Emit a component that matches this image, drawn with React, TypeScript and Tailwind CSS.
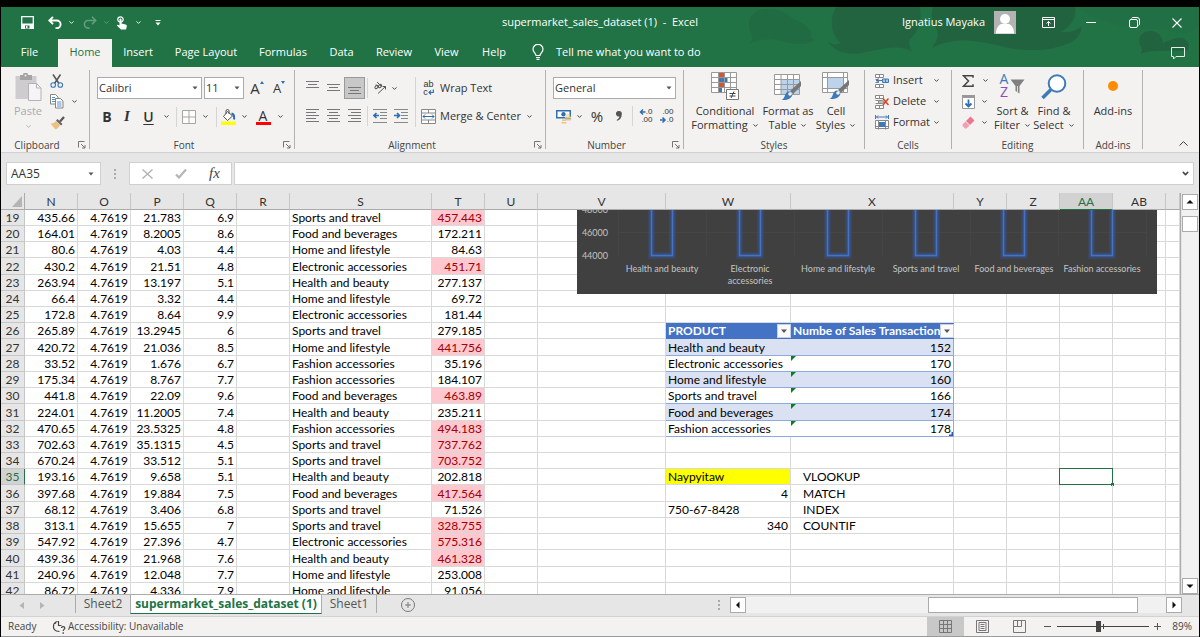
import type { ReactNode } from 'react';
import { ChevronDown, ChevronUp } from 'lucide-react';
import clsx from 'clsx';

type Row = { n: string; p: string; q: string; s: string; t: string };

const FIRST_ROW = 19;

const ROWS: Row[] = [
  { n: '435.66', p: '21.783', q: '6.9', s: 'Sports and travel', t: '457.443' },
  { n: '164.01', p: '8.2005', q: '8.6', s: 'Food and beverages', t: '172.211' },
  { n: '80.6', p: '4.03', q: '4.4', s: 'Home and lifestyle', t: '84.63' },
  { n: '430.2', p: '21.51', q: '4.8', s: 'Electronic accessories', t: '451.71' },
  { n: '263.94', p: '13.197', q: '5.1', s: 'Health and beauty', t: '277.137' },
  { n: '66.4', p: '3.32', q: '4.4', s: 'Home and lifestyle', t: '69.72' },
  { n: '172.8', p: '8.64', q: '9.9', s: 'Electronic accessories', t: '181.44' },
  { n: '265.89', p: '13.2945', q: '6', s: 'Sports and travel', t: '279.185' },
  { n: '420.72', p: '21.036', q: '8.5', s: 'Home and lifestyle', t: '441.756' },
  { n: '33.52', p: '1.676', q: '6.7', s: 'Fashion accessories', t: '35.196' },
  { n: '175.34', p: '8.767', q: '7.7', s: 'Fashion accessories', t: '184.107' },
  { n: '441.8', p: '22.09', q: '9.6', s: 'Food and beverages', t: '463.89' },
  { n: '224.01', p: '11.2005', q: '7.4', s: 'Health and beauty', t: '235.211' },
  { n: '470.65', p: '23.5325', q: '4.8', s: 'Fashion accessories', t: '494.183' },
  { n: '702.63', p: '35.1315', q: '4.5', s: 'Sports and travel', t: '737.762' },
  { n: '670.24', p: '33.512', q: '5.1', s: 'Sports and travel', t: '703.752' },
  { n: '193.16', p: '9.658', q: '5.1', s: 'Health and beauty', t: '202.818' },
  { n: '397.68', p: '19.884', q: '7.5', s: 'Food and beverages', t: '417.564' },
  { n: '68.12', p: '3.406', q: '6.8', s: 'Sports and travel', t: '71.526' },
  { n: '313.1', p: '15.655', q: '7', s: 'Sports and travel', t: '328.755' },
  { n: '547.92', p: '27.396', q: '4.7', s: 'Electronic accessories', t: '575.316' },
  { n: '439.36', p: '21.968', q: '7.6', s: 'Health and beauty', t: '461.328' },
  { n: '240.96', p: '12.048', q: '7.7', s: 'Home and lifestyle', t: '253.008' },
  { n: '86.72', p: '4.336', q: '7.9', s: 'Home and lifestyle', t: '91.056' },
];

// Keyed by sheet row number
const PRODUCTS: Record<number, [string, string]> = {
  27: ['Health and beauty', '152'],
  28: ['Electronic accessories', '170'],
  29: ['Home and lifestyle', '160'],
  30: ['Sports and travel', '166'],
  31: ['Food and beverages', '174'],
  32: ['Fashion accessories', '178'],
};

const LOOKUPS: Record<number, [string, string]> = {
  35: ['Naypyitaw', 'VLOOKUP'],
  36: ['4', 'MATCH'],
  37: ['750-67-8428', 'INDEX'],
  38: ['340', 'COUNTIF'],
};

const COLUMNS = [
  { name: 'N', width: 'w-[53px]' },
  { name: 'O', width: 'w-[53px]' },
  { name: 'P', width: 'w-[53px]' },
  { name: 'Q', width: 'w-[53px]' },
  { name: 'R', width: 'w-[53px]' },
  { name: 'S', width: 'w-[142px]' },
  { name: 'T', width: 'w-[53px]' },
  { name: 'U', width: 'w-[53px]' },
  { name: 'V', width: 'w-[128px]' },
  { name: 'W', width: 'w-[125px]' },
  { name: 'X', width: 'w-[163px]' },
  { name: 'Y', width: 'w-[53px]' },
  { name: 'Z', width: 'w-[53px]' },
  { name: 'AA', width: 'w-[53px]' },
  { name: 'AB', width: 'w-[53px]' },
  { name: '', width: '' },
];

const TABS = [
  { name: 'File', width: 'w-[57px]' },
  { name: 'Home', width: 'w-[54px]' },
  { name: 'Insert', width: 'w-[52px]' },
  { name: 'Page Layout', width: 'w-[84px]' },
  { name: 'Formulas', width: 'w-[70px]' },
  { name: 'Data', width: 'w-[47px]' },
  { name: 'Review', width: 'w-[58px]' },
  { name: 'View', width: 'w-[47px]' },
  { name: 'Help', width: 'w-[48px]' },
];

/* ---------- small shared pieces ---------- */

function Btn({ label, className, children }: { label?: string; className?: string; children: ReactNode }) {
  return (
    <button
      type="button"
      aria-label={label}
      className={clsx('flex shrink-0 items-center justify-center whitespace-nowrap', className)}
    >
      {children}
    </button>
  );
}

function Chev({ className }: { className?: string }) {
  return <ChevronDown size={7} strokeWidth={3} className={clsx('shrink-0', className)} aria-hidden />;
}

function More({ className, label = 'More' }: { className?: string; label?: string }) {
  return (
    <Btn label={label} className={className}>
      <Chev />
    </Btn>
  );
}

function Sep({ className }: { className?: string }) {
  return (
    <div className={clsx('flex shrink-0 justify-center', className)}>
      <div className="h-5 w-px bg-[#d5d5d5]" />
    </div>
  );
}

function Combo({ label, value, className }: { label: string; value: string; className?: string }) {
  return (
    <div className={clsx('relative h-[22px] shrink-0', className)}>
      <select
        aria-label={label}
        className="h-full w-full appearance-none border border-[#ababab] bg-white pl-px text-[11px] leading-4 text-[#333]"
      >
        <option>{value}</option>
      </select>
      <svg viewBox="0 0 6 4" className="pointer-events-none absolute top-[9px] right-1 h-1 w-1.5" aria-hidden>
        <path d="M0.5 0.5h5L3 3.5z" fill="#555" />
      </svg>
    </div>
  );
}

function Launcher() {
  return (
    <svg viewBox="0 0 8 8" className="h-2 w-2" fill="none" stroke="#666" strokeWidth="0.9">
      <path d="M0.5 6.5v-6h6M3 3l4 4M7 4v3H4" />
    </svg>
  );
}

function Group({
  title,
  launcher,
  className,
  children,
}: {
  title: string;
  launcher?: boolean;
  className?: string;
  children: ReactNode;
}) {
  return (
    <section className={clsx('flex shrink-0', className)} aria-label={title}>
      <div className="flex min-w-0 flex-1 flex-col">
        <div className="flex-1">{children}</div>
        <div
          className={clsx(
            'relative flex h-[14px] items-center justify-center text-[10px] text-[#444]',
            launcher && 'pr-4',
          )}
        >
          {title}
          {launcher && (
            <Btn label={`${title} settings`} className="absolute right-[3px]">
              <Launcher />
            </Btn>
          )}
        </div>
      </div>
      <div className="my-[3px] w-px bg-[#b1b1b1]" />
    </section>
  );
}

function BigButton({ icon, lines, more, className }: { icon: ReactNode; lines: string[]; more?: boolean; className?: string }) {
  return (
    <button type="button" className={clsx('flex shrink-0 flex-col items-center pt-[5px]', className)}>
      <span className="flex h-8 items-start justify-center">{icon}</span>
      {lines.map((line, i) => (
        <span key={line} className="flex h-[14px] items-center gap-1 whitespace-nowrap text-[11px]">
          {line}
          {more && i === lines.length - 1 && <Chev />}
        </span>
      ))}
    </button>
  );
}

/* ---------- icons ---------- */

function LinesIcon({ lines }: { lines: [number, number, number][] }) {
  return (
    <svg viewBox="0 0 14 16" className="h-4 w-3.5" stroke="#777" strokeWidth="1">
      {lines.map(([x, y, w]) => (
        <path key={y} d={`M${x} ${y}.5h${w}`} />
      ))}
    </svg>
  );
}

function IndentIcon({ right }: { right?: boolean }) {
  return (
    <svg viewBox="0 0 14 14" className="h-3.5 w-3.5" fill="none" stroke="#888">
      <path d="M0 0.5h14M7 3.5h7M7 6.5h7M7 9.5h7M0 13.5h14" />
      <path
        d={right ? 'M0 6.5h5M3 4l2.5 2.5L3 9' : 'M1 6.5h5M3.5 4L1 6.5 3.5 9'}
        stroke="#2b6cb0"
        strokeWidth="1.6"
      />
    </svg>
  );
}

function PasteIcon() {
  return (
    <svg viewBox="0 0 27 28" className="h-7 w-[27px]">
      <path d="M0.5 3h21v23h-21z" fill="#cfcccf" />
      <path d="M5 2h3a2.5 2.5 0 0 1 5 0h4v5H5z" fill="#a5a3a5" />
      <circle cx="10.5" cy="2.5" r="1" fill="#f1f1f1" />
      <path d="M13.5 10.5h8l4.500 4.500v12.500H13.500z" fill="#f7f4f8" stroke="#b5b2b6" />
      <path d="M21.5 10.5v4.500h4.500" fill="none" stroke="#b5b2b6" />
    </svg>
  );
}

function ScissorsIcon() {
  return (
    <svg viewBox="0 0 14 14" className="h-3.5 w-3.5" fill="none">
      <path d="M3 0.5l6 9M10.5 0.5l-6 9" stroke="#555" strokeWidth="1.5" />
      <circle cx="3.2" cy="11" r="2.3" stroke="#3e7ab8" strokeWidth="1.1" />
      <circle cx="10.3" cy="11" r="2.3" stroke="#3e7ab8" strokeWidth="1.1" />
    </svg>
  );
}

function CopyIcon() {
  return (
    <svg viewBox="0 0 14 15" className="h-[15px] w-3.5" fill="#fff" stroke="#777" strokeWidth="0.9">
      <path d="M0.5 0.5h5l2.500 2.500v7h-7.500z" />
      <path d="M5.5 4.5h5l2.500 2.500v7H5.500z" />
      <path d="M2 3.5h3M2 5.5h3M2 7.5h3M7 8h4.500M7 10h4.500M7 12h4.500" stroke="#4a84bf" />
    </svg>
  );
}

function PainterIcon() {
  return (
    <svg viewBox="0 0 15 14" className="h-3.5 w-[15px]">
      <path d="M0.5 7.5c2 0 4-0.5 5.500-2.500l4 4c-1 2-2.500 3.500-4.500 4.500z" fill="#ecc07e" />
      <path d="M6 4.5l1.500-1.500 5 5L11 9.500z" fill="#666" />
      <path d="M10 5.5l4-4.500" stroke="#555" strokeWidth="2.2" />
    </svg>
  );
}

function BordersIcon() {
  return (
    <svg viewBox="0 0 14 14" className="h-3.5 w-3.5" fill="#fdfdfd" stroke="#a5a5a5">
      <path d="M0.5 0.5h13v13h-13zM7 0.5v13M0.5 7h13" />
    </svg>
  );
}

function FillColorIcon() {
  return (
    <svg viewBox="0 0 15 16" className="h-4 w-[15px]" fill="none">
      <path d="M6.5 2.5l5 4.500-5 4.500-4-4z" fill="#fff" stroke="#555" />
      <path d="M5 5V2a1.500 1.500 0 0 1 3 0v3" stroke="#555" />
      <path d="M10.5 4.5c2.500 0.500 3 3 2.500 6" stroke="#2f6eb0" strokeWidth="2" />
      <path d="M0 12.500h15v3.500H0z" fill="#ffff00" />
    </svg>
  );
}

function OrientationIcon() {
  return (
    <svg viewBox="0 0 14 14" className="h-3.5 w-3.5" fill="none" stroke="#555">
      <ellipse cx="3.5" cy="6" rx="1.8" ry="1.3" transform="rotate(-45 3.5 6)" />
      <ellipse cx="7" cy="5" rx="1.8" ry="1.3" transform="rotate(-45 7 5)" />
      <path d="M3 3.5l3 3M4 1l4.500 4.500M5 12.500l7.500-7M9.500 5.500h3v3" />
    </svg>
  );
}

function MergeIcon() {
  return (
    <svg viewBox="0 0 15 15" className="h-[15px] w-[15px]" fill="none" stroke="#888">
      <path d="M0.5 0.5h14v14H0.500zM0.500 4h14M0.500 11h14M7.500 0.500V4M7.500 11v3.500" fill="#fff" />
      <path d="M2 7.5h11M4 5.500l-2 2 2 2M11 5.500l2 2-2 2" stroke="#2b6cb0" />
    </svg>
  );
}

function CurrencyIcon() {
  return (
    <svg viewBox="0 0 15 15" className="h-[15px] w-[15px]">
      <path d="M0.75 1.75h13.500v7H0.750z" fill="#fff" stroke="#2f6eb0" strokeWidth="1.5" />
      <circle cx="7.5" cy="5.2" r="2.2" fill="#2f6eb0" />
      <path d="M9 7.5h6v1.500H9zM9 10h6v1.500H9zM6 10.500h4V12H6zM5.500 13h5v1.500h-5zM9 5.500h5v1H9z" fill="#efc57f" />
    </svg>
  );
}

function BrushOverlay() {
  return (
    <>
      <path d="M27 9v5l-8 8-3-3z" fill="#777" />
      <path d="M15.5 19.5l3 3c-1 4-5 6-11 5.500 3-1.500 3-4 4-6 1-2 2.500-2.500 4-2.500z" fill="#3e7ab8" />
      <circle cx="16" cy="22" r="1.8" fill="#f1f1f1" />
    </>
  );
}

function ConditionalIcon() {
  return (
    <svg viewBox="0 0 28 28" className="h-7 w-7">
      <path d="M0.5 0.5h25v20h-25z" fill="#fff" />
      <path d="M8 0.5h5v5H8zM8 11h6v4.500H8z" fill="#d9532c" />
      <path d="M8 6h8.500v4.500H8zM8 16h3v4.500H8z" fill="#3e7ab8" />
      <path
        d="M0.5 0.5h25v20h-25zM0.5 5.5h25M0.5 10.5h25M0.5 15.5h25M7.5 0.5v20M13.5 0.5v20M19.5 0.5v20"
        fill="none"
        stroke="#999"
      />
      <path d="M15.5 17.5h12v10h-12z" fill="#fff" stroke="#777" />
      <path d="M18.5 21.5h6M18.5 24h6M23 19.5l-3 6.500" stroke="#444" fill="none" />
    </svg>
  );
}

function FormatTableIcon() {
  return (
    <svg viewBox="0 0 28 29" className="h-[29px] w-7">
      <path d="M0.5 2.5h25v20h-25z" fill="#fff" />
      <path d="M7 8h18.500v14.500H7z" fill="#bdd3ec" />
      <path
        d="M0.5 2.5h25v20h-25zM0.5 7.5h25M0.5 12.5h25M0.5 17.5h25M7 2.5v20M13.5 2.5v20M19.5 2.5v20"
        fill="none"
        stroke="#999"
      />
      <BrushOverlay />
    </svg>
  );
}

function CellStylesIcon() {
  return (
    <svg viewBox="0 0 28 28" className="h-7 w-7">
      <path d="M0.5 0.5h25v20h-25zM0.5 5.5h25M0.5 16.5h25M5.5 0.5v20M21.5 0.5v20" fill="#fff" stroke="#999" />
      <path d="M5.5 5.5h16v11h-16z" fill="#bdd3ec" stroke="#999" />
      <g transform="translate(0 -1)">
        <BrushOverlay />
      </g>
    </svg>
  );
}

function CellsIcon({ kind }: { kind: 'insert' | 'delete' | 'format' }) {
  if (kind === 'format') {
    return (
      <svg viewBox="0 0 14 15" className="h-[15px] w-3.5" fill="none" stroke="#888">
        <path d="M0.5 0v4M13.5 0v4M1.5 2h11M3 0.5L1.5 2 3 3.5M11 0.5L12.5 2 11 3.5" stroke="#3e7ab8" />
        <path d="M0.5 5.5h13v8h-13zM3.5 5.5v9M10.5 5.5v9M0.5 11.5h13" fill="#fff" />
        <path d="M4 7h6v5H4z" fill="#3e7ab8" stroke="none" />
      </svg>
    );
  }
  return (
    <svg viewBox="0 0 14 14" className="h-3.5 w-3.5" fill="none" stroke="#888">
      <path d="M0.5 0.5h8v3h-8zM4.5 0.5v3M0.5 10.5h8v3h-8zM4.5 10.5v3M0.5 8.5h3v-3h-3" fill="#fff" />
      {kind === 'insert' ? (
        <>
          <path d="M7.5 5h6v3.500h-6zM10.500 5v3.500" fill="#a9c6e6" stroke="#3e7ab8" />
          <path d="M7 6.5H1M3.500 4.500l-2.500 2 2.500 2" stroke="#3e7ab8" />
        </>
      ) : (
        <>
          <path d="M3.5 5.5h4l2 1.500-2 1.500h-4z" fill="#bbb" />
          <path d="M8 3.5l5.500 6.500M13.500 3.500L8 10" stroke="#d9431f" strokeWidth="1.5" />
        </>
      )}
    </svg>
  );
}

function DecimalIcon({ increase }: { increase?: boolean }) {
  return (
    <span className="flex w-[15px] flex-col items-end font-['Liberation_Sans',sans-serif] text-[8px] leading-[8px]">
      <span className="flex items-center">
        {increase && (
          <svg viewBox="0 0 7 6" className="h-1.5 w-[7px]" fill="none" stroke="#2f6eb0" strokeWidth="1.5">
            <path d="M1.500 3h5M4 0.500L1.500 3 4 5.500" />
          </svg>
        )}
        {increase ? '.0' : '.00'}
      </span>
      <span className="flex items-center">
        {!increase && (
          <svg viewBox="0 0 7 6" className="h-1.5 w-[7px]" fill="none" stroke="#2f6eb0" strokeWidth="1.5">
            <path d="M0 3h5M2.500 0.500L5 3 2.500 5.500" />
          </svg>
        )}
        {increase ? '.00' : '.0'}
      </span>
    </span>
  );
}

function WrapIcon() {
  return (
    <span className="flex w-[15px] flex-col items-center font-['Liberation_Sans',sans-serif] text-[9px] leading-[8px]">
      <span>ab</span>
      <span className="flex items-center">
        c
        <svg viewBox="0 0 6 6" className="h-1.5 w-1.5" fill="none" stroke="#2f6eb0" strokeWidth="1.2">
          <path d="M5.300 0.500v3H1.500M3 1.500l-2 2 2 2" />
        </svg>
      </span>
    </span>
  );
}

function SortIcon() {
  return (
    <span className="flex items-start">
      <span className="flex flex-col items-center text-[14px] leading-[13px]">
        <span className="text-[#3e7ab8]">A</span>
        <span className="text-[#8a4fb5]">Z</span>
      </span>
      <svg viewBox="0 0 15 15" className="mt-[7px] ml-0.5 h-[15px] w-[15px]">
        <path d="M0.5 0.5h14L9.500 7v7.500l-4-2.500V7z" fill="#808080" />
        <path d="M7.5 7v6" stroke="#ddd" />
      </svg>
    </span>
  );
}

function FindIcon() {
  return (
    <svg viewBox="0 0 26 26" className="mt-0.5 h-[26px] w-[26px]" fill="none" stroke="#3e7ab8">
      <circle cx="16" cy="9.5" r="8.3" fill="#fff" strokeWidth="2" />
      <path d="M10 15.5L1.500 24" strokeWidth="3.6" />
    </svg>
  );
}

function FillDownIcon() {
  return (
    <svg viewBox="0 0 13 14" className="h-3.5 w-[13px]" fill="none">
      <path d="M0.5 0.5h12v13h-12z" fill="#fff" stroke="#999" />
      <path d="M0 0h13v3H0z" fill="#999" />
      <path d="M6.5 4.5v7M3.500 8.500l3 3 3-3" stroke="#2f6eb0" strokeWidth="1.8" />
    </svg>
  );
}

function EraserIcon() {
  return (
    <svg viewBox="0 0 13 13" className="h-[13px] w-[13px]">
      <path d="M8.5 0.5l4 4-4.500 4.500-4-4z" fill="#e8788f" />
      <path d="M3.5 5.5l4 4-3 3H3L0.500 10V8.500z" fill="#f0a0b0" />
    </svg>
  );
}

/* ---------- title bar and tabs ---------- */

function TitleBar() {
  return (
    <div className="relative grid h-8 grid-cols-[1fr_auto_1fr] items-center pb-px text-[11px] text-white">
      <div className="flex items-center pl-[19px]">
        <Btn label="Save" className="w-[14px]">
          <svg viewBox="0 0 13 13" className="h-[13px] w-[13px]" fill="none" stroke="#fff" strokeWidth="1.3">
            <path d="M0.7 0.7h11.600v11.600H0.700z" />
            <path d="M1 7.5h11v5H1z" fill="#fff" stroke="none" />
            <path d="M4 9.5h4.500v3H4z" fill="#217346" stroke="none" />
            <path d="M5 10h1.500v2H5z" fill="#fff" stroke="none" />
          </svg>
        </Btn>
        <Btn label="Undo" className="ml-[13px] w-4">
          <svg viewBox="0 0 14 13" className="h-[13px] w-3.5" fill="none" stroke="#fff" strokeWidth="1.9">
            <path d="M5 0.8L1.300 4.500 5 8.200M1.500 4.500h7.300a3.800 3.800 0 0 1 0 7.600H7.500" />
          </svg>
        </Btn>
        <More className="w-4" label="Undo list" />
        <Btn label="Redo" className="ml-[3px] w-4 opacity-30">
          <svg viewBox="0 0 14 13" className="h-[13px] w-3.5" fill="none" stroke="#fff" strokeWidth="1.6">
            <path d="M9 0.8l3.700 3.700L9 8.200M12.500 4.500H5.200a3.800 3.800 0 0 0 0 7.600h1.300" />
          </svg>
        </Btn>
        <More className="w-4 opacity-30" label="Redo list" />
        <Btn label="Touch mode" className="w-4">
          <svg viewBox="0 0 12 14" className="h-3.5 w-3">
            <circle cx="4.5" cy="3.5" r="2.7" fill="none" stroke="#fff" strokeWidth="1.2" />
            <path d="M3.5 3.5a1 1 0 0 1 2 0v4l4 1c1 0.300 1.500 1 1.300 2L10 13.500H5L0.800 9.500c0.500-1 1.500-1 2.700 0z" fill="#fff" />
          </svg>
        </Btn>
        <More className="w-4" label="Touch options" />
        <Btn label="Customize toolbar" className="ml-1 w-4">
          <svg viewBox="0 0 6 6" className="h-1.5 w-1.5">
            <path d="M0.5 0h5v1h-5zM0.500 2.500h5L3 5.500z" fill="#fff" />
          </svg>
        </Btn>
      </div>
      <h1 className="whitespace-pre">supermarket_sales_dataset (1)  -  Excel</h1>
      <div className="flex items-center justify-end pr-3.5">
        <span>Ignatius Mayaka</span>
        <svg viewBox="0 0 22 23" className="ml-[9px] h-[23px] w-[22px]">
          <path d="M0 0h22v23H0z" fill="#b3b3b3" />
          <circle cx="11" cy="8" r="5" fill="#fff" />
          <path d="M2 22.5c0-6 3-9 5.500-9.500h7c2.500 0.500 5.500 3.500 5.500 9.500z" fill="#fff" />
        </svg>
        <Btn label="Ribbon display options" className="ml-6 w-4">
          <svg viewBox="0 0 13 11" className="h-[11px] w-[13px]" fill="none" stroke="#fff">
            <path d="M0.5 0.5h12v10h-12zM0.5 2.5h12M6.5 9V4.5M4.5 6.5l2-2 2 2" />
          </svg>
        </Btn>
        <Btn label="Minimize" className="ml-[27px] w-4">
          <span className="h-px w-2.5 bg-white" />
        </Btn>
        <Btn label="Restore" className="ml-[27px] w-4">
          <svg viewBox="0 0 11 11" className="h-[11px] w-[11px]" fill="none" stroke="#fff">
            <rect x="0.5" y="2.5" width="8" height="8" rx="1.5" />
            <path d="M2.5 1.5c0.500-0.800 1-1 1.500-1h4a2.500 2.500 0 0 1 2.500 2.500v4c0 0.500-0.200 1-1 1.500" />
          </svg>
        </Btn>
        <Btn label="Close" className="ml-[27px] w-4">
          <svg viewBox="0 0 10 10" className="h-2.5 w-2.5" fill="none" stroke="#fff" strokeWidth="1.1">
            <path d="M0.5 0.5l9 9M9.500 0.500l-9 9" />
          </svg>
        </Btn>
      </div>
    </div>
  );
}

function TabBar() {
  return (
    <nav className="relative flex h-7 text-[11px] text-white">
      {TABS.map((tab) => (
        <button
          key={tab.name}
          type="button"
          className={clsx(
            'flex shrink-0 items-center justify-center whitespace-nowrap pb-0.5',
            tab.width,
            tab.name === 'Home' && 'bg-[#f3f2f1] text-[#217346]',
          )}
        >
          {tab.name}
        </button>
      ))}
      <button type="button" className="ml-[14px] flex items-center gap-3 whitespace-nowrap pb-0.5">
        <svg viewBox="0 0 12 16" className="h-4 w-3" fill="none" stroke="#fff" strokeWidth="1.2">
          <path d="M4 11.5C4 9 1 8.500 1 5.300a5 5 0 0 1 10 0C11 8.500 8 9 8 11.500zM4 13.500h4M4.500 15.300h3" />
        </svg>
        Tell me what you want to do
      </button>
      <Btn label="Comments" className="mr-[14px] ml-auto">
        <svg viewBox="0 0 14 13" className="h-[13px] w-3.5" fill="none" stroke="#e5efe9">
          <path d="M0.5 0.5h13v9H5l-2.500 2.500V9.500h-2z" />
        </svg>
      </Btn>
    </nav>
  );
}

function Header() {
  return (
    <header className="relative overflow-hidden bg-[#217346]">
      <svg viewBox="0 0 460 60" className="absolute top-0 right-0 h-[60px] w-[460px]" fill="#22633f" aria-hidden>
        <path
          d="M10 37c3-3 4-6 2-10C6 12 14 2 28 2c12 0 20 4 26 10 10 4 20 10 18 18l3 3c-6 6-20 4-34 1-10-3-20-2-31 3z"
          opacity="0.5"
        />
        <path
          d="M97 0h84c2 12 0 24-10 32-2 5 0 9 3 13-14-8-28-3-42-1-14 4-30 4-38-4-3-2-5-3-4-5 4 3 8 3 12 1-10-8-12-24-5-36z"
          opacity="0.9"
        />
        <path d="M194 0h142c2 10-4 20-14 25 8 1 14-1 20-5 1 8-6 14-14 17-14 6-36 8-58 4-22-5-52-14-77 0 4-6 8-12 4-20-5-7-5-14-3-21z" />
        <path
          d="M401 47c3-3 2-6 0-9-3-10 4-14 11-14s11 5 12 12c6-2 12-6 19-5 6 2 8 6 6 12-14 2-24 0-32 1-6 0-11 1-16 3z"
        />
        <path d="M338 0h122v20c-10 8-22 8-34 2-20 2-44-2-60-8-12-4-22-8-28-14z" opacity="0.2" />
      </svg>
      <TitleBar />
      <TabBar />
    </header>
  );
}

/* ---------- ribbon ---------- */

function Ribbon() {
  return (
    <div className="flex h-[86px] overflow-hidden border-b border-[#d2d2d2] bg-[#f3f2f1] text-[11px] text-[#333]">
      <Group title="Clipboard" launcher className="w-[89px]">
        <div className="flex">
          <button type="button" className="flex w-[54px] flex-col items-center pt-1.5 text-[#aaa]">
            <PasteIcon />
            <span className="mt-1 leading-3">Paste</span>
            <Chev className="mt-1.5" />
          </button>
          <div className="-ml-1.5 flex flex-col pt-[3px]">
            <Btn label="Cut" className="h-[21px] w-4">
              <ScissorsIcon />
            </Btn>
            <div className="flex">
              <Btn label="Copy" className="h-[21px] w-4">
                <CopyIcon />
              </Btn>
              <More className="w-[18px]" label="Copy options" />
            </div>
            <Btn label="Format painter" className="h-[21px] w-4">
              <PainterIcon />
            </Btn>
          </div>
        </div>
      </Group>

      <Group title="Font" launcher className="w-[205px]">
        <div className="flex flex-col gap-1.5 pt-2.5 pl-[7px]">
          <div className="flex items-center">
            <Combo label="Font" value="Calibri" className="w-[105px]" />
            <Combo label="Font size" value="11" className="ml-0.5 w-10" />
            <Btn label="Increase font size" className="ml-1 w-[18px] text-[15px]">
              A
              <svg viewBox="0 0 4 3" className="mb-3 h-[3px] w-1">
                <path d="M0 3h4L2 0z" fill="#2f6eb0" />
              </svg>
            </Btn>
            <Btn label="Decrease font size" className="ml-1 w-[18px] text-[13px]">
              A
              <svg viewBox="0 0 4 3" className="mb-3 h-[3px] w-1">
                <path d="M0 0h4L2 3z" fill="#2f6eb0" />
              </svg>
            </Btn>
          </div>
          <div className="flex h-[22px] items-center">
            <Btn label="Bold" className="w-5 text-[14px] font-bold">
              B
            </Btn>
            <Btn label="Italic" className="w-5 font-['Liberation_Serif',serif] text-[15px] font-bold italic">
              I
            </Btn>
            <Btn label="Underline" className="w-[23px] text-[14px] font-semibold underline underline-offset-2">
              U
            </Btn>
            <More className="w-3" label="Underline options" />
            <Sep className="w-2" />
            <Btn label="Borders" className="w-[17px]">
              <BordersIcon />
            </Btn>
            <More className="w-4" label="Border options" />
            <Sep className="w-1.5" />
            <Btn label="Fill color" className="w-[18px]">
              <FillColorIcon />
            </Btn>
            <More className="w-[15px]" label="Fill options" />
            <Btn label="Font color" className="w-[22px]">
              <span className="flex w-[15px] justify-center border-b-[3px] border-[#ff0000] text-[14px] leading-[13px]">
                A
              </span>
            </Btn>
            <More className="w-3" label="Font color options" />
          </div>
        </div>
      </Group>

      <Group title="Alignment" launcher className="w-[251px]">
        <div className="flex pt-2.5 pl-[7px]">
          <div className="flex flex-col gap-1.5">
            <div className="flex h-[22px] items-center">
              <Btn label="Top align" className="w-[21px]">
                <LinesIcon lines={[[0, 1, 13], [2, 4, 9], [0, 7, 13]]} />
              </Btn>
              <Btn label="Middle align" className="w-[21px]">
                <LinesIcon lines={[[0, 4, 13], [2, 7, 9], [0, 10, 13]]} />
              </Btn>
              <Btn label="Bottom align" className="h-[22px] w-[21px] border border-[#999] bg-[#c8c8c8]">
                <LinesIcon lines={[[0, 7, 13], [2, 10, 9], [0, 13, 13]]} />
              </Btn>
              <Sep className="w-[5px]" />
              <Btn label="Orientation" className="w-5">
                <OrientationIcon />
              </Btn>
              <More className="w-[9px]" label="Orientation options" />
            </div>
            <div className="flex h-[22px] items-center">
              <Btn label="Align left" className="w-[21px]">
                <LinesIcon lines={[[0, 1, 13], [0, 4, 10], [0, 7, 13], [0, 10, 10], [0, 13, 13]]} />
              </Btn>
              <Btn label="Center" className="w-[21px]">
                <LinesIcon lines={[[0, 1, 13], [2, 4, 9], [0, 7, 13], [2, 10, 9], [0, 13, 13]]} />
              </Btn>
              <Btn label="Align right" className="w-[21px]">
                <LinesIcon lines={[[0, 1, 13], [3, 4, 10], [0, 7, 13], [3, 10, 10], [0, 13, 13]]} />
              </Btn>
              <Sep className="w-[5px]" />
              <Btn label="Decrease indent" className="w-5">
                <IndentIcon />
              </Btn>
              <Btn label="Increase indent" className="w-[21px]">
                <IndentIcon right />
              </Btn>
            </div>
          </div>
          <div className="mx-1 w-px bg-[#d5d5d5]" />
          <div className="flex flex-col gap-1.5">
            <Btn label="Wrap Text" className="h-[22px] justify-start! gap-1 pl-px">
              <WrapIcon />
              Wrap Text
            </Btn>
            <div className="flex h-[22px] items-center">
              <Btn className="w-[101px] justify-start! gap-1 pl-px">
                <MergeIcon />
                Merge &amp; Center
              </Btn>
              <More className="w-4" label="Merge options" />
            </div>
          </div>
        </div>
      </Group>

      <Group title="Number" launcher className="w-[138px]">
        <div className="flex flex-col gap-1.5 pt-2.5 pl-[7px]">
          <Combo label="Number format" value="General" className="w-[123px]" />
          <div className="flex h-[22px] items-center">
            <Btn label="Accounting format" className="w-5">
              <CurrencyIcon />
            </Btn>
            <More className="w-3" label="Accounting options" />
            <Btn className="w-6 text-[15px]">%</Btn>
            <Btn label="Comma style" className="w-5">
              <svg viewBox="0 0 6 10" className="h-2.5 w-1.5">
                <path d="M3 0a2.800 2.800 0 0 1 2.800 3C5.800 6.500 4 9 1 9.800l-0.400-0.900C2.200 8.200 3.300 7 3.400 5.500A2.800 2.800 0 1 1 3 0z" fill="#555" />
              </svg>
            </Btn>
            <Sep className="w-1.5" />
            <Btn label="Increase decimal" className="w-5">
              <DecimalIcon increase />
            </Btn>
            <Btn label="Decrease decimal" className="w-[22px]">
              <DecimalIcon />
            </Btn>
          </div>
        </div>
      </Group>

      <Group title="Styles" className="w-[181px]">
        <div className="flex">
          <BigButton icon={<ConditionalIcon />} lines={['Conditional', 'Formatting']} more className="w-[82px]" />
          <BigButton icon={<FormatTableIcon />} lines={['Format as', 'Table']} more className="w-11" />
          <BigButton icon={<CellStylesIcon />} lines={['Cell', 'Styles']} more className="w-[52px]" />
        </div>
      </Group>

      <Group title="Cells" className="w-[87px]">
        <div className="flex flex-col pt-[3px] pl-2.5">
          <Btn className="h-[21px] justify-start! gap-1">
            <CellsIcon kind="insert" />
            <span className="w-9 text-left">Insert</span>
            <Chev />
          </Btn>
          <Btn className="h-[21px] justify-start! gap-1">
            <CellsIcon kind="delete" />
            <span className="w-9 text-left">Delete</span>
            <Chev />
          </Btn>
          <Btn className="h-[21px] justify-start! gap-1">
            <CellsIcon kind="format" />
            <span className="w-9 text-left">Format</span>
            <Chev />
          </Btn>
        </div>
      </Group>

      <Group title="Editing" className="w-[132px]">
        <div className="flex">
          <div className="flex flex-col pt-[3px] pl-2.5">
            <Btn label="AutoSum" className="h-[21px] justify-start! gap-2">
              <svg viewBox="0 0 12 12" className="h-3 w-3" fill="none" stroke="#444" strokeWidth="1.5">
                <path d="M11 2.8V0.800H1.500L6.500 6l-5 5.200H11V9.200" />
              </svg>
              <Chev />
            </Btn>
            <Btn label="Fill" className="h-[21px] justify-start! gap-1.5">
              <FillDownIcon />
              <Chev />
            </Btn>
            <Btn label="Clear" className="h-[21px] justify-start! gap-1.5">
              <EraserIcon />
              <Chev />
            </Btn>
          </div>
          <BigButton icon={<SortIcon />} lines={['Sort &', 'Filter']} more className="w-[47px]" />
          <BigButton icon={<FindIcon />} lines={['Find &', 'Select']} more className="w-9" />
        </div>
      </Group>

      <Group title="Add-ins" className="w-[59px]">
        <BigButton
          icon={<span className="mt-[9px] h-2.5 w-2.5 rounded-full bg-[#ff8c00]" />}
          lines={['Add-ins']}
          className="w-full"
        />
      </Group>

      <Btn label="Collapse ribbon" className="mt-auto mr-2 mb-px ml-auto">
        <ChevronUp size={15} strokeWidth={1.5} />
      </Btn>
    </div>
  );
}

function GripDots() {
  return (
    <div className="flex flex-col gap-0.5">
      <span className="h-0.5 w-0.5 bg-[#aaa]" />
      <span className="h-0.5 w-0.5 bg-[#aaa]" />
      <span className="h-0.5 w-0.5 bg-[#aaa]" />
    </div>
  );
}

function FormulaBar() {
  return (
    <div className="flex h-10 bg-[#e6e6e6] px-[5px] pt-[9px] pb-2 text-[#444]">
      <div className="flex w-[95px] items-center border border-[#d0d0d0] bg-white pr-1.5">
        <input
          aria-label="Name box"
          defaultValue="AA35"
          className="h-full min-w-0 flex-1 pl-1 text-[12px] text-[#333]"
        />
        <svg viewBox="0 0 6 4" className="h-1 w-1.5" aria-hidden>
          <path d="M0.5 0.5h5L3 3.500z" fill="#555" />
        </svg>
      </div>
      <div className="flex w-7 items-center justify-center">
        <GripDots />
      </div>
      <div className="flex w-[103px] items-center border border-[#d0d0d0] bg-white">
        <Btn label="Cancel" className="w-[34px]">
          <svg viewBox="0 0 11 10" className="h-2.5 w-[11px]" stroke="#b5b5b5" strokeWidth="1.5">
            <path d="M0.5 0.5l10 9M10.500 0.500l-10 9" />
          </svg>
        </Btn>
        <Btn label="Enter" className="w-[34px]">
          <svg viewBox="0 0 12 10" className="h-2.5 w-3" fill="none" stroke="#b5b5b5" strokeWidth="2.2">
            <path d="M1 5.5L4 8.500l7-8" />
          </svg>
        </Btn>
        <Btn label="Insert function" className="w-[33px] font-['Liberation_Serif',serif] text-[15px] italic">
          fx
        </Btn>
      </div>
      <div className="ml-0.5 flex flex-1 items-center border border-[#d0d0d0] bg-white">
        <input aria-label="Formula bar" className="h-full min-w-0 flex-1 px-1 text-[12px]" />
        <Btn label="Expand formula bar" className="w-4">
          <ChevronDown size={9} strokeWidth={4} />
        </Btn>
      </div>
    </div>
  );
}

/* ---------- sheet ---------- */

const CHART_LABELS = [
  ['Health and beauty'],
  ['Electronic', 'accessories'],
  ['Home and lifestyle'],
  ['Sports and travel'],
  ['Food and beverages'],
  ['Fashion accessories'],
];

function Chart() {
  return (
    <svg
      viewBox="0 0 580 84"
      className="absolute top-[17px] left-[576px] h-[84px] w-[580px] font-[Lato,sans-serif] text-[9px]"
      role="img"
      aria-label="Sales by product"
    >
      <path d="M0 0h580v84H0z" fill="#404040" />
      <path d="M41 22.5h528" stroke="#464646" />
      {[41, 129, 217, 305, 393, 481, 569].map((x) => (
        <path key={x} d={`M${x}.5 0v45`} stroke="#454545" />
      ))}
      <g fill="#c4c4c4" textAnchor="end">
        <text x="31" y="3">48000</text>
        <text x="31" y="26">46000</text>
        <text x="31" y="49">44000</text>
      </g>
      {CHART_LABELS.map((lines, i) => {
        const x = 85 + i * 88;
        const bar = `M${x - 11}.5 -2v47.500h21v-47.500`;
        return (
          <g key={lines[0]} fill="none">
            <path d={bar} stroke="#2f5db0" strokeWidth="7" opacity="0.25" />
            <path d={bar} stroke="#2f5db0" strokeWidth="4" opacity="0.4" />
            <path d={bar} stroke="#4472c4" strokeWidth="1.5" />
            {lines.map((line, j) => (
              <text key={line} x={x} y={62 + j * 12} fill="#c4c4c4" textAnchor="middle">
                {line}
              </text>
            ))}
          </g>
        );
      })}
    </svg>
  );
}

function FilterButton() {
  return (
    <Btn label="Filter" className="h-[14px] w-[14px] border border-[#c5cfe6] bg-[#fafafa]">
      <svg viewBox="0 0 6 4" className="h-1 w-1.5">
        <path d="M0 0.5h6L3 4z" fill="#555" />
      </svg>
    </Btn>
  );
}

const CELL = 'border-r border-b border-[#d9d9d9] px-0.5 whitespace-nowrap';

function ProductCells({ row }: { row: number }) {
  if (row === 26) {
    return (
      <>
        <td className="border-b border-[#4472c4] bg-[#4472c4] pl-0.5 font-bold text-white">
          <div className="flex items-center justify-between">
            PRODUCT
            <FilterButton />
          </div>
        </td>
        <td className="border-b border-[#4472c4] bg-[#4472c4] pl-0.5 font-bold text-white">
          <div className="flex items-center justify-between">
            <span className="whitespace-nowrap">Numbe of Sales Transaction</span>
            <FilterButton />
          </div>
        </td>
      </>
    );
  }
  if (PRODUCTS[row]) {
    const [name, count] = PRODUCTS[row];
    const band = row % 2 === 1 && 'bg-[#d9e1f2]';
    return (
      <>
        <td className={clsx('border-b border-[#8ea9db] px-0.5 whitespace-nowrap', band)}>{name}</td>
        <td className={clsx('relative border-r border-b border-[#8ea9db] px-0.5 text-right', band)}>
          {row > 27 && (
            <svg viewBox="0 0 5 5" className="absolute top-0 left-0 h-[5px] w-[5px]">
              <path d="M0 0h5L0 5z" fill="#0a7d1c" />
            </svg>
          )}
          {count}
          {row === 32 && (
            <svg viewBox="0 0 4 4" className="absolute right-0 bottom-0 h-1 w-1">
              <path d="M4 0v4H0V2.500h2.500V0z" fill="#2f55b0" />
            </svg>
          )}
        </td>
      </>
    );
  }
  if (LOOKUPS[row]) {
    const [value, fn] = LOOKUPS[row];
    return (
      <>
        <td className={clsx(CELL, value.length < 4 && 'text-right', row === 35 && 'bg-[#ffff00]')}>{value}</td>
        <td className={clsx(CELL, 'pl-3')}>{fn}</td>
      </>
    );
  }
  return (
    <>
      <td className={CELL} />
      <td className={CELL} />
    </>
  );
}

function Sheet() {
  return (
    <div className="relative min-w-0 flex-1 overflow-hidden border-r border-[#ababab] bg-white">
      <table className="w-full table-fixed border-separate border-spacing-0 font-[Lato,sans-serif] text-[12px] leading-[15px] text-black">
        <colgroup>
          <col className="w-6" />
          {COLUMNS.map((col) => (
            <col key={col.name} className={col.width} />
          ))}
        </colgroup>
        <thead>
          <tr className="h-[17px] bg-[#e6e6e6]">
            <th className="border-r border-b border-[#ababab]">
              <svg viewBox="0 0 11 11" className="ml-auto h-[11px] w-[13px]" aria-hidden>
                <path d="M10 0v11H0z" fill="#b5b5b5" />
              </svg>
            </th>
            {COLUMNS.map((col) => (
              <th
                key={col.name}
                className={clsx(
                  'border-r border-b border-r-[#c6c6c6] text-[12px] font-normal',
                  col.name === 'AA'
                    ? 'border-b-[#217346] bg-[#d2d2d2] text-[#217346]'
                    : 'border-b-[#ababab] text-[#333]',
                )}
              >
                {col.name}
              </th>
            ))}
          </tr>
        </thead>
        <tbody>
          {ROWS.map((r, i) => {
            const row = FIRST_ROW + i;
            const high = Number(r.t) > 300;
            return (
              <tr key={row} className={i % 9 === 3 || i % 9 === 8 ? 'h-[17px]' : 'h-4'}>
                <th
                  className={clsx(
                    'border-r border-b border-[#c6c6c6] font-normal',
                    row === 35 ? 'border-r-[#217346] bg-[#d2d2d2] text-[#217346]' : 'bg-[#e6e6e6] text-[#333]',
                  )}
                >
                  {row}
                </th>
                <td className={clsx(CELL, 'text-right')}>{r.n}</td>
                <td className={clsx(CELL, 'text-right')}>4.7619</td>
                <td className={clsx(CELL, 'text-right')}>{r.p}</td>
                <td className={clsx(CELL, 'text-right')}>{r.q}</td>
                <td className={CELL} />
                <td className={CELL}>{r.s}</td>
                <td className={clsx(CELL, 'text-right', high && 'bg-[#ffc7ce] text-[#9c0006]')}>{r.t}</td>
                <td className={CELL} />
                <td className={CELL} />
                <ProductCells row={row} />
                <td className={CELL} />
                <td className={CELL} />
                <td className={clsx(CELL, 'relative')}>
                  {row === 35 && (
                    <div className="absolute -inset-px border border-[#217346]">
                      <span className="absolute -right-0.5 -bottom-0.5 h-[3px] w-[3px] bg-[#217346]" />
                    </div>
                  )}
                </td>
                <td className={CELL} />
                <td className={CELL} />
              </tr>
            );
          })}
        </tbody>
      </table>
      <Chart />
    </div>
  );
}

function ScrollButton({ label, d }: { label: string; d: string }) {
  return (
    <Btn label={label} className="h-4 w-4 border border-[#ababab] bg-white">
      <svg viewBox="0 0 8 8" className="h-2 w-2">
        <path d={d} fill="#111" />
      </svg>
    </Btn>
  );
}

function SheetTabs() {
  return (
    <div className="flex h-[22px] border-t border-[#ababab] bg-[#e6e6e6] pr-[17px] text-[12px] text-[#555]">
      <div className="flex w-[74px] items-center gap-4 pl-[18px]">
        <Btn label="Previous sheet">
          <svg viewBox="0 0 5 7" className="h-[7px] w-[5px]">
            <path d="M5 0v7L0.500 3.500z" fill="#b5b5b5" />
          </svg>
        </Btn>
        <Btn label="Next sheet">
          <svg viewBox="0 0 5 7" className="h-[7px] w-[5px]">
            <path d="M0 0v7l4.500-3.500z" fill="#b5b5b5" />
          </svg>
        </Btn>
      </div>
      <Btn className="mb-[3px] w-[55px] border-l border-[#ababab]">Sheet2</Btn>
      <Btn className="mb-0.5 w-[192px] border-x border-b border-x-[#ababab] border-b-[#217346] bg-white font-bold text-[#217346]">
        supermarket_sales_dataset (1)
      </Btn>
      <Btn className="mb-[3px] w-[55px] border-r border-[#ababab]">Sheet1</Btn>
      <Btn label="New sheet" className="mb-0.5 ml-6">
        <svg viewBox="0 0 14 14" className="h-3.5 w-3.5" fill="none" stroke="#777">
          <circle cx="7" cy="7" r="6.5" />
          <path d="M7 4v6M4 7h6" />
        </svg>
      </Btn>
      <div className="ml-auto flex w-[464px] items-center gap-2.5 pt-px pb-[3px]">
        <GripDots />
        <div className="flex flex-1">
          <ScrollButton label="Scroll left" d="M5.5 0.5v7L2 4z" />
          <div className="flex h-4 flex-1 justify-end bg-[#f1f1f1] pr-7">
            <div className="h-4 w-[210px] border border-[#ababab] bg-white" />
          </div>
          <ScrollButton label="Scroll right" d="M2.5 0.5v7L6 4z" />
        </div>
      </div>
    </div>
  );
}

function StatusBar() {
  return (
    <footer className="flex h-[21px] items-stretch border-t border-b border-t-[#d2d2d2] border-b-[#9a9a9a] bg-[#f3f2f1] pr-[7px] text-[10px] text-[#444]">
      <span className="flex w-[51px] items-center pl-[7px]">Ready</span>
      <Btn className="gap-0.5">
        <svg viewBox="0 0 14 14" className="h-3.5 w-3.5" fill="none" stroke="#444" strokeWidth="1.2">
          <path d="M5.5 1.5a5 5 0 0 0-1 9.500l3 0.500M6.500 1v4.500h3M4 3l-2.500 1M9.500 8c0-1.800 3.300-1.800 3.300 0 0 1.500-1.600 1.300-1.600 3" />
          <path d="M10.5 12.3h1.400v1.400h-1.400z" fill="#444" stroke="none" />
        </svg>
        Accessibility: Unavailable
      </Btn>
      <Btn label="Normal view" className="ml-auto w-[37px] bg-[#c8c8c8]">
        <svg viewBox="0 0 13 13" className="h-[13px] w-[13px]" fill="none" stroke="#777">
          <path d="M0.5 0.5h12v12h-12zM4.5 0.5v12M8.5 0.5v12M0.5 4.5h12M0.5 8.5h12" />
        </svg>
      </Btn>
      <Btn label="Page layout view" className="w-[37px]">
        <svg viewBox="0 0 13 13" className="h-[13px] w-[13px]" fill="none" stroke="#777">
          <path d="M0.5 0.5h12v12h-12zM3 2.5h7v8H3zM4.500 4.500h4M4.500 6.500h4M4.500 8.500h4" />
        </svg>
      </Btn>
      <Btn label="Page break view" className="w-[37px]">
        <svg viewBox="0 0 13 13" className="h-[13px] w-[13px]" fill="none" stroke="#777">
          <path d="M0.5 0.5h12v12h-12zM4.5 0.5v6M8.5 0.5v6M0.5 6.5h8" />
        </svg>
      </Btn>
      <Btn label="Zoom out" className="ml-0.5 w-[15px]">
        <span className="h-px w-[7px] bg-[#555]" />
      </Btn>
      <div className="relative ml-0.5 flex w-[92px] items-center">
        <input
          type="range"
          aria-label="Zoom"
          min={0}
          max={200}
          defaultValue={89}
          className="h-px w-full appearance-none bg-[#444] [&::-webkit-slider-thumb]:h-[11px] [&::-webkit-slider-thumb]:w-[5px] [&::-webkit-slider-thumb]:appearance-none [&::-webkit-slider-thumb]:bg-[#444]"
        />
        <span className="absolute left-1/2 h-[5px] w-px bg-[#444]" />
      </div>
      <Btn label="Zoom in" className="ml-1 w-[9px]">
        <svg viewBox="0 0 7 7" className="h-[7px] w-[7px]" stroke="#555">
          <path d="M0 3.5h7M3.500 0v7" />
        </svg>
      </Btn>
      <Btn label="Zoom level 89%" className="w-[30px] justify-end!">
        89%
      </Btn>
    </footer>
  );
}

export default function App() {
  return (
    <div className="flex h-screen flex-col overflow-hidden border-x border-t-[7px] border-black bg-[#e6e6e6] font-['Open_Sans','Noto_Sans',sans-serif]">
      <Header />
      <Ribbon />
      <FormulaBar />
      <main className="flex min-h-0 flex-1">
        <Sheet />
        <div className="flex w-[18px] shrink-0 flex-col items-center pt-px">
          <ScrollButton label="Scroll up" d="M0.5 5.5h7L4 2z" />
          <div className="w-4 flex-1 bg-[#f1f1f1] pt-1.5">
            <div className="h-4 w-4 border border-[#ababab] bg-white" />
          </div>
          <ScrollButton label="Scroll down" d="M0.5 2.5h7L4 6z" />
        </div>
      </main>
      <SheetTabs />
      <StatusBar />
    </div>
  );
}
